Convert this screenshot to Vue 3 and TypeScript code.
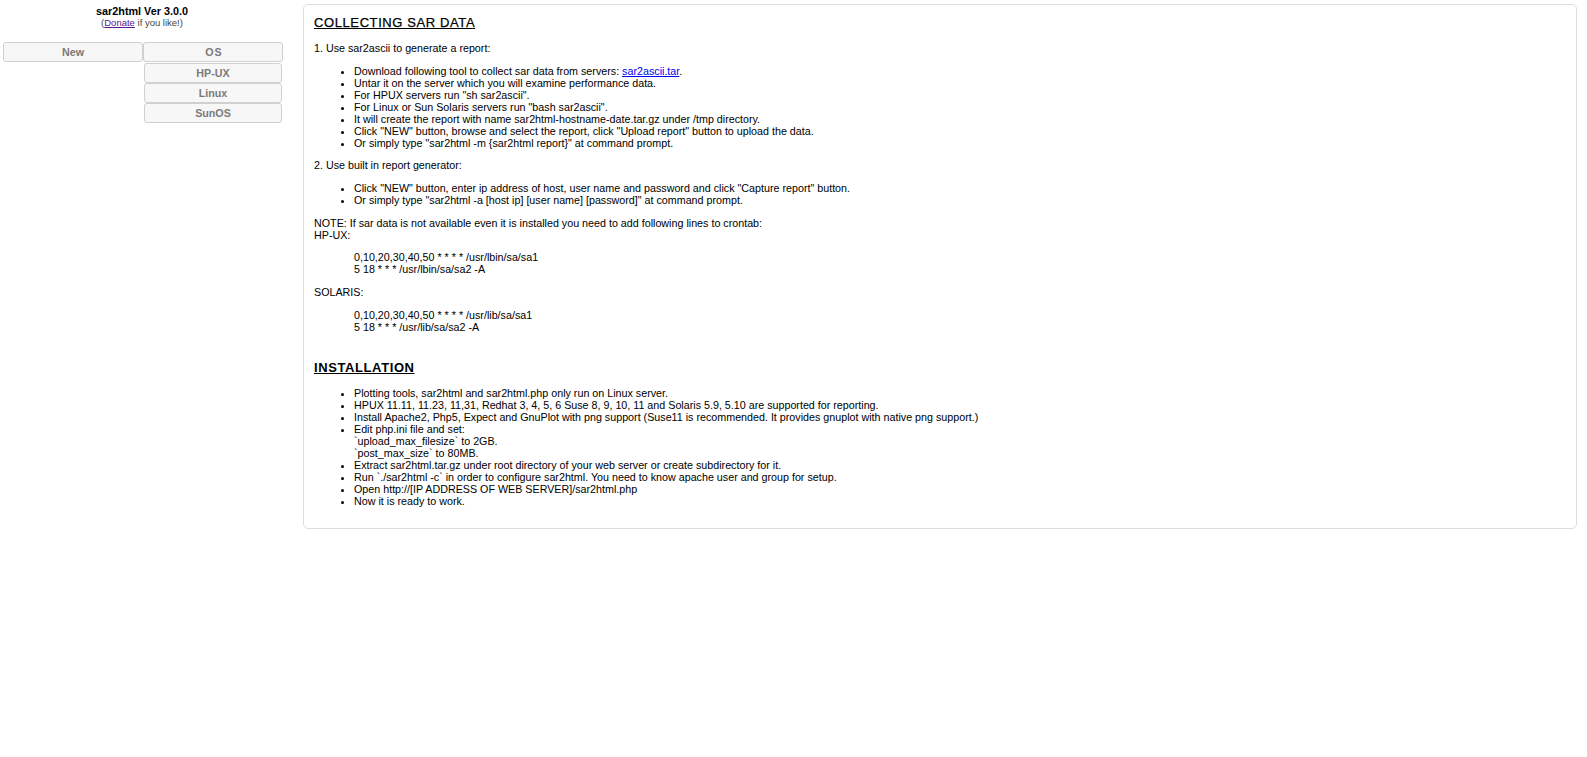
<script setup lang="ts">
const osItems: string[] = ['HP-UX', 'Linux', 'SunOS']
</script>

<template>
  <div class="page">
    <aside class="side">
      <div class="brand">
        <div class="title">sar2html Ver 3.0.0</div>
        <div class="sub">(<a class="visited" href="#">Donate</a> if you like!)</div>
      </div>
      <div class="menu">
        <div class="col first"><div class="btn">New</div></div>
        <div class="col">
          <div class="btn os">OS</div>
          <div class="btn item" v-for="o in osItems" :key="o">{{ o }}</div>
        </div>
      </div>
    </aside>
    <main class="panel">
      <h2>COLLECTING SAR DATA</h2>
      <p>1. Use sar2ascii to generate a report:</p>
      <ul>
        <li>Download following tool to collect sar data from servers: <a href="#">sar2ascii.tar</a>.</li>
        <li>Untar it on the server which you will examine performance data.</li>
        <li>For HPUX servers run "sh sar2ascii".</li>
        <li>For Linux or Sun Solaris servers run "bash sar2ascii".</li>
        <li>It will create the report with name sar2html-hostname-date.tar.gz under /tmp directory.</li>
        <li>Click "NEW" button, browse and select the report, click "Upload report" button to upload the data.</li>
        <li>Or simply type "sar2html -m {sar2html report}" at command prompt.</li>
      </ul>
      <p class="near">2. Use built in report generator:</p>
      <ul>
        <li>Click "NEW" button, enter ip address of host, user name and password and click "Capture report" button.</li>
        <li>Or simply type "sar2html -a [host ip] [user name] [password]" at command prompt.</li>
      </ul>
      <p>NOTE: If sar data is not available even it is installed you need to add following lines to crontab:<br />HP-UX:</p>
      <blockquote class="near">0,10,20,30,40,50 * * * * /usr/lbin/sa/sa1<br />5 18 * * * /usr/lbin/sa/sa2 -A</blockquote>
      <p>SOLARIS:</p>
      <blockquote>0,10,20,30,40,50 * * * * /usr/lib/sa/sa1<br />5 18 * * * /usr/lib/sa/sa2 -A</blockquote>
      <h2 class="second">INSTALLATION</h2>
      <ul>
        <li>Plotting tools, sar2html and sar2html.php only run on Linux server.</li>
        <li>HPUX 11.11, 11.23, 11,31, Redhat 3, 4, 5, 6 Suse 8, 9, 10, 11 and Solaris 5.9, 5.10 are supported for reporting.</li>
        <li>Install Apache2, Php5, Expect and GnuPlot with png support (Suse11 is recommended. It provides gnuplot with native png support.)</li>
        <li>Edit php.ini file and set:<br />`upload_max_filesize` to 2GB.<br />`post_max_size` to 80MB.</li>
        <li>Extract sar2html.tar.gz under root directory of your web server or create subdirectory for it.</li>
        <li>Run `./sar2html -c` in order to configure sar2html. You need to know apache user and group for setup.</li>
        <li>Open http://[IP ADDRESS OF WEB SERVER]/sar2html.php</li>
        <li>Now it is ready to work.</li>
      </ul>
    </main>
  </div>
</template>

<style>
html, body { background: #fff; }
</style>

<style scoped>
.page {
  display: flex;
  align-items: flex-start;
  min-height: 757px;
  font-family: "Liberation Sans", Arial, sans-serif;
  font-size: 10.72px;
  line-height: 12px;
  color: #000;
}
.side { width: 303px; flex: none; }
.brand { height: 42px; padding-top: 5px; box-sizing: border-box; padding-right: 19px; text-align: center; }
.title { font-weight: 700; font-size: 10.8px; line-height: 12px; }
.sub { font-size: 9.5px; line-height: 11px; color: #444; }
.visited { color: #551a8b; }
.menu { display: flex; padding-left: 3px; }
.col { width: 140px; }
.first { width: 140px; }
.btn {
  box-sizing: border-box;
  height: 20px;
  border: 1px solid #d0d0d0;
  border-radius: 3px;
  background: #f7f7f7;
  color: #7a7a7a;
  font-weight: 700;
  text-align: center;
  line-height: 18px;
}
.os { letter-spacing: 1px; padding-left: 2px; }
.item { width: 138px; margin-left: 1px; }
.os + .item { margin-top: 1px; }
.panel {
  box-sizing: border-box;
  width: 1274px;
  height: 525px;
  margin-top: 4px;
  padding: 10px;
  border: 1px solid #ddd;
  border-radius: 5px;
}
h2 {
  margin: 0;
  font-size: 13px;
  line-height: 16px;
  font-weight: 400;
  letter-spacing: 0.6px;
  text-decoration: underline;
  -webkit-text-stroke: 0.25px #000;
}
h2.second { margin-top: 27px; font-weight: 700; -webkit-text-stroke: 0; }
p { margin: 11px 0 0; }
ul { margin: 11px 0 0; padding-left: 40px; }
blockquote { margin: 11px 0 0 40px; }
p.near, blockquote.near { margin-top: 10px; }
a { color: #00e; }
</style>
